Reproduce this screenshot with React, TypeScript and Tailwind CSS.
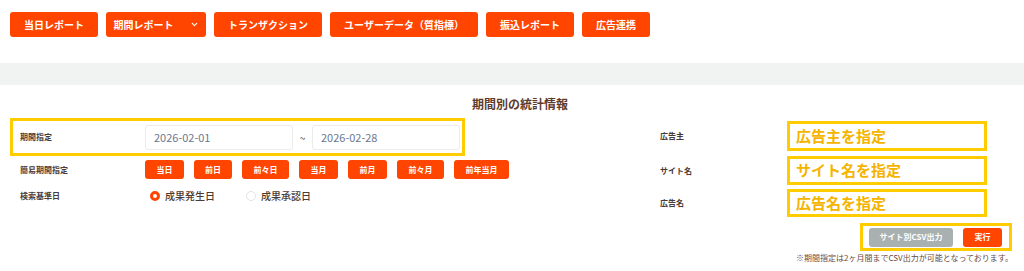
import { ChevronDown } from 'lucide-react';

const navItems = [
  { label: '当日レポート', w: 'w-[88px]' },
  { label: '期間レポート', w: 'w-[100px]', caret: true },
  { label: 'トランザクション', w: 'w-[108px]' },
  { label: 'ユーザーデータ（質指標）', w: 'w-[148px]' },
  { label: '振込レポート', w: 'w-[88px]' },
  { label: '広告連携', w: 'w-[68px]' },
];

const quickRanges = [
  { label: '当日', w: 'w-[39px]' },
  { label: '前日', w: 'w-[38px]' },
  { label: '前々日', w: 'w-[47px]' },
  { label: '当月', w: 'w-[39px]' },
  { label: '前月', w: 'w-[39px]' },
  { label: '前々月', w: 'w-[47px]' },
  { label: '前年当月', w: 'w-[55px]' },
];

const filters = [
  { label: '広告主', value: '広告主を指定', h: 'h-[30px]', mt: 'mt-0' },
  { label: 'サイト名', value: 'サイト名を指定', h: 'h-[29px]', mt: 'mt-[5px]' },
  { label: '広告名', value: '広告名を指定', h: 'h-[28px]', mt: 'mt-[4px]' },
];

export default function App() {
  return (
    <div className="w-[1024px] h-[271px] bg-white overflow-hidden text-[#4b3b36]" style={{ fontFamily: '"Noto Sans CJK JP", "Noto Sans", sans-serif' }}>
      {/* top nav */}
      <div className="flex gap-2 pl-[10px] pt-[12px]">
        {navItems.map((n) => (
          <button
            key={n.label}
            className={`${n.w} h-[25px] flex items-center justify-center gap-[16px] bg-[#ff4500] text-white text-[10px] font-bold rounded-[3px]`}
          >
            {n.label}
            {n.caret && <ChevronDown size={9} strokeWidth={3} />}
          </button>
        ))}
      </div>

      <div className="mt-[26px] h-[22px] bg-[#f1f2f2]" />

      <div className="pt-[11px] pl-[16px] text-center text-[12px] leading-[16px] font-bold text-[#5c3b2e]">期間別の統計情報</div>

      <div className="flex mt-[6px]">
        {/* left */}
        <div className="w-[640px] pl-[10px]">
          <div className="w-[455px] h-[38px] border-[3px] border-[#ffcc00] flex items-center pl-[7px]">
            <span className="w-[125px] text-[8px] font-bold">期間指定</span>
            <div className="w-[148px] h-[25px] border border-[#ececec] rounded-[3px] flex items-center px-[8px] text-[11px] text-[#6b7790]">2026-02-01</div>
            <span className="w-[19px] text-center text-[10px] text-[#555]">~</span>
            <div className="w-[148px] h-[25px] border border-[#ececec] rounded-[3px] flex items-center px-[8px] text-[11px] text-[#6b7790]">2026-02-28</div>
          </div>

          <div className="flex items-center mt-[4px] pl-[10px]">
            <span className="w-[125px] text-[8px] font-bold">簡易期間指定</span>
            <div className="flex gap-[10px]">
              {quickRanges.map((q) => (
                <button key={q.label} className={`${q.w} h-[19px] bg-[#ff4500] text-white text-[8px] font-bold rounded-[3px]`}>
                  {q.label}
                </button>
              ))}
            </div>
          </div>

          <div className="flex items-center mt-[9px] pl-[10px]">
            <span className="w-[125px] text-[8px] font-bold">検索基準日</span>
            <label className="flex items-center gap-[5px] ml-[5px] text-[10px] font-medium">
              <span className="w-[10px] h-[10px] rounded-full border-[3px] border-[#ff4500] bg-white" />
              成果発生日
            </label>
            <label className="flex items-center gap-[5px] ml-[31px] text-[10px] font-medium">
              <span className="w-[10px] h-[10px] rounded-full border border-[#e4e4e4] bg-white" />
              成果承認日
            </label>
          </div>
        </div>

        {/* right */}
        <div className="flex-1 pt-[3px] pl-[20px]">
          {filters.map((f) => (
            <div key={f.label} className={`flex items-center ${f.mt}`}>
              <span className="w-[127px] text-[8px] font-bold">{f.label}</span>
              <div className={`w-[200px] ${f.h} border-[3px] border-[#ffcc00] flex items-center pl-[6px] text-[15px] font-bold text-[#f5b400]`}>
                {f.value}
              </div>
            </div>
          ))}

          <div className="flex justify-end pr-[12px] mt-[6px]">
            <div className="w-[152px] h-[28px] border-[3px] border-[#ffcc00] flex items-center justify-end gap-[10px] pr-[7px]">
              <button className="w-[84px] h-[19px] bg-[#a8b0b0] text-white text-[8px] font-bold rounded-[3px]">サイト別CSV出力</button>
              <button className="w-[39px] h-[19px] bg-[#ff4500] text-white text-[8px] font-bold rounded-[3px]">実行</button>
            </div>
          </div>
          <div className="flex justify-end pr-[11px] mt-[1px] text-[8px] leading-[12px] text-[#6b4a3e]">※期間指定は2ヶ月間までCSV出力が可能となっております。</div>
        </div>
      </div>
    </div>
  );
}
